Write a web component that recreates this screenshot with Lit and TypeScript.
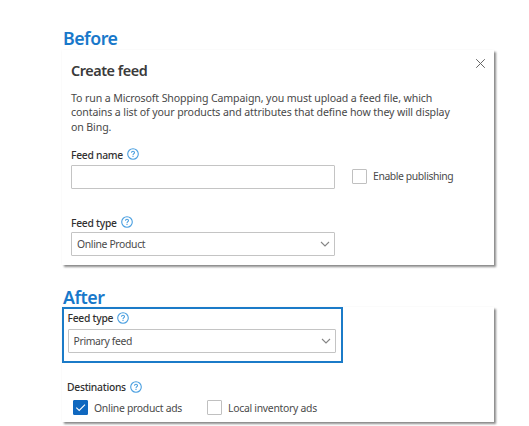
import { LitElement, html, css } from "lit";
import { customElement, property } from "lit/decorators.js";

@customElement("help-icon")
class HelpIcon extends LitElement {
  static styles = css`
    :host { display: block; width: 12px; height: 12px; margin-top: -1px; }
    svg { display: block; }
  `;
  render() {
    return html`<svg width="12" height="12" viewBox="0 0 12 12" fill="none" stroke="#4a9fe0">
      <circle cx="6" cy="6" r="5.3" stroke-width="1.1" />
      <path d="M4.5 4.7C4.5 2.7 7.6 2.8 7.5 4.6C7.4 5.7 6 5.7 6 7.2" stroke-width="1.1" />
      <path d="M6 8V9.1" stroke-width="1.1" />
    </svg>`;
  }
}

@customElement("field-label")
class FieldLabel extends LitElement {
  @property() text = "";
  static styles = css`
    :host { display: flex; align-items: center; height: 14px; gap: 4px; }
    .text { font-size: 10.3px; font-weight: 500; letter-spacing: -0.26px; line-height: 14px; color: #303030; white-space: nowrap; }
  `;
  render() {
    return html`<span class="text">${this.text}</span><help-icon></help-icon>`;
  }
}

@customElement("select-box")
class SelectBox extends LitElement {
  @property() value = "";
  static styles = css`
    :host {
      display: flex; align-items: center; justify-content: space-between; box-sizing: border-box;
      height: 24px; padding: 0 4px 0 5px; border: 1px solid #c4c4c4; border-radius: 1px; background: #fff;
    }
    .value { font-size: 10.4px; letter-spacing: -0.35px; line-height: 14px; color: #4a4a4a; white-space: nowrap; }
    svg { display: block; }
  `;
  render() {
    return html`<span class="value">${this.value}</span>
      <svg width="10" height="8" viewBox="0 0 10 8" fill="none" stroke="#858585" stroke-width="1.1">
        <path d="M1 2L5 6L9 2" />
      </svg>`;
  }
}

@customElement("check-option")
class CheckOption extends LitElement {
  @property() label = "";
  @property({ type: Boolean }) checked = false;
  static styles = css`
    :host { display: flex; align-items: center; gap: 6px; height: 15px; letter-spacing: -0.4px; }
    .box { box-sizing: border-box; width: 15px; height: 15px; border: 1px solid #c0c0c0; border-radius: 1px; background: #fff; }
    .on { background: #1068bf; border-color: #1068bf; }
    .label { font-size: 10.4px; line-height: 14px; color: #4a4a4a; white-space: nowrap; }
    svg { display: block; }
  `;
  render() {
    return html`<span class="box ${this.checked ? "on" : ""}">
        ${this.checked
          ? html`<svg width="13" height="13" viewBox="0 0 13 13" fill="none" stroke="#fff" stroke-width="1.1">
              <path d="M2.3 6.6L5.2 9.4L11 3.6" />
            </svg>`
          : ""}
      </span>
      <span class="label">${this.label}</span>`;
  }
}

@customElement("app-root")
class AppRoot extends LitElement {
  static styles = css`
    :host {
      display: block; box-sizing: border-box; width: 529px; height: 426px; padding: 27px 35px 0 62px;
      overflow: hidden; background: #fff; font-family: "Noto Sans", sans-serif;
    }
    h1 { margin: 0; padding-left: 1px; height: 23px; font-size: 17.8px; letter-spacing: -0.5px; line-height: 22px; font-weight: 600; color: #1878ca; }
    .card { box-sizing: border-box; width: 432px; background: #fff; box-shadow: 0 0 2px rgba(0, 0, 0, 0.05), 1.5px 1.5px 2px rgba(0, 0, 0, 0.45); }
    .before { height: 215px; padding: 13px 9px 0; }
    .head { display: flex; justify-content: space-between; }
    h2 { margin: 0; font-size: 14.4px; letter-spacing: -0.45px; line-height: 16px; height: 16px; font-weight: 600; color: #3a3a3a; }
    .close { display: block; margin-top: -5px; margin-right: -1px; }
    p { margin: 11.5px 0 0; font-size: 10.6px; letter-spacing: -0.12px; line-height: 14.7px; color: #484848; white-space: nowrap; }
    .name { margin-top: 13px; }
    .row { display: flex; align-items: center; gap: 17px; margin-top: 3px; }
    .row check-option { margin-top: -1px; }
    .input { box-sizing: border-box; width: 264px; height: 24px; border: 1px solid #c4c4c4; border-radius: 1px; }
    .type { margin-top: 27px; }
    .select { width: 264px; margin-top: 2px; }
    .after-title { margin-top: 21px; }
    .after { height: 115px; margin-top: -2px; }
    .highlight { box-sizing: border-box; width: 281px; height: 56px; margin-left: -0.5px; border: 2px solid #1b7bc8; padding: 3px 5px 0 4px; }
    .highlight field-label { margin-top: -1px; }
    .highlight select-box { margin-top: 4px; }
    .dest { margin: 17px 0 0 5px; }
    .options { display: flex; gap: 25px; margin: 6px 0 0 11px; }
    .options check-option { letter-spacing: -0.28px; }
  `;
  render() {
    return html`
      <h1>Before</h1>
      <section class="card before">
        <div class="head">
          <h2>Create feed</h2>
          <svg class="close" width="11" height="11" viewBox="0 0 11 11" fill="none" stroke="#666" stroke-width="1">
            <path d="M1.2 1.2L9.8 9.8M9.8 1.2L1.2 9.8" />
          </svg>
        </div>
        <p>To run a Microsoft Shopping Campaign, you must upload a feed file, which<br />contains a list of your products and attributes that define how they will display<br />on Bing.</p>
        <field-label class="name" text="Feed name"></field-label>
        <div class="row">
          <div class="input"></div>
          <check-option label="Enable publishing"></check-option>
        </div>
        <field-label class="type" text="Feed type"></field-label>
        <select-box class="select" value="Online Product"></select-box>
      </section>
      <h1 class="after-title">After</h1>
      <section class="card after">
        <div class="highlight">
          <field-label text="Feed type"></field-label>
          <select-box value="Primary feed"></select-box>
        </div>
        <field-label class="dest" text="Destinations"></field-label>
        <div class="options">
          <check-option checked label="Online product ads"></check-option>
          <check-option label="Local inventory ads"></check-option>
        </div>
      </section>
    `;
  }
}
